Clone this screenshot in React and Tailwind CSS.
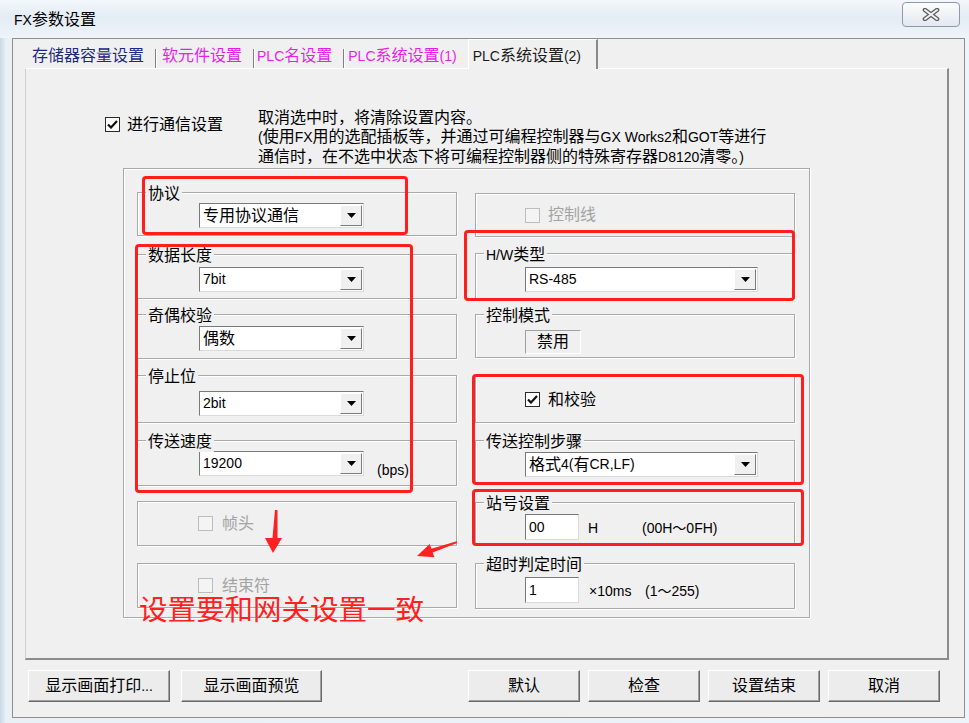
const L = ({ children }) => <span className="text-[14px]">{children}</span>;

function Check({ checked, disabled }) {
  return (
    <span
      className={`flex h-[15px] w-[15px] shrink-0 items-center justify-center border ${
        disabled ? "border-[#bdbdbd] bg-[#f4f4f4]" : "border-[#2b2b2b] bg-white"
      }`}
    >
      {checked && (
        <svg width="11" height="9" viewBox="0 0 11 9">
          <path d="M1 4.5 4 7.5 10 1" fill="none" stroke="#111" strokeWidth="2.2" />
        </svg>
      )}
    </span>
  );
}

function Group({ label, className = "", children }) {
  return (
    <div className={`relative border border-[#a9a9a9] shadow-[1px_1px_0_#fff,inset_1px_1px_0_#fff] ${className}`}>
      {label && (
        <span className="absolute left-[8px] top-[-9px] bg-[#f0f0f0] px-[2px] leading-[20px]">{label}</span>
      )}
      {children}
    </div>
  );
}

function Combo({ w, children }) {
  return (
    <div className={`flex h-[25px] ${w} border border-[#7a7a7a] border-r-[#dadada] border-b-[#dadada] bg-white`}>
      <div className="flex flex-1 items-center pl-[3px]">{children}</div>
      <div className="my-[1px] mr-[1px] flex w-[22px] items-center justify-center border border-white border-r-[#7a7a7a] border-b-[#7a7a7a] bg-[#f0f0f0]">
        <svg width="9" height="5" viewBox="0 0 9 5">
          <path d="M0 0h9L4.5 5z" fill="#000" />
        </svg>
      </div>
    </div>
  );
}

function Input({ children }) {
  return (
    <div className="flex h-[26px] w-[54px] items-center border border-[#7a7a7a] border-r-[#dadada] border-b-[#dadada] bg-white pl-[3px]">
      {children}
    </div>
  );
}

function Btn({ w, children }) {
  return (
    <div
      className={`${w} flex h-[32px] items-center justify-center border border-t-white border-l-white border-r-[#696969] border-b-[#696969] bg-[#ececec] shadow-[inset_-1px_-1px_0_#a0a0a0]`}
    >
      {children}
    </div>
  );
}

function Mark({ className }) {
  return <div className={`pointer-events-none absolute rounded-[4px] border-[3px] border-[#ff1e1e] ${className}`} />;
}

export default function App() {
  return (
    <div className="relative h-[723px] w-[969px] overflow-hidden bg-[linear-gradient(90deg,#c9d7e6_0px,#e9f0f6_6px,#eef5fa_100%)] font-['Liberation_Sans','Noto_Sans_CJK_SC',sans-serif] text-[16px] text-black">
      {/* title bar */}
      <div className="flex h-[38px] items-start bg-[linear-gradient(180deg,#f3f7fb,#e4ecf4_45%,#eef4f9)]">
        <div className="pl-[14px] pt-[10px] leading-[20px]">
          <L>FX</L>参数设置
        </div>
        <div className="ml-auto mr-[9px] mt-[2px] flex h-[25px] w-[58px] items-center justify-center rounded-[4px] border border-[#8d9aa8] bg-[linear-gradient(180deg,#fbfcfd,#e3e9ef)]">
          <svg width="20" height="13" viewBox="0 0 20 13">
            <path d="M4 2 16 11M16 2 4 11" stroke="#5e5e5e" strokeWidth="4.6" strokeLinecap="round" />
            <path d="M4 2 16 11M16 2 4 11" stroke="#f2f2f2" strokeWidth="2" strokeLinecap="round" />
          </svg>
        </div>
      </div>

      {/* dialog */}
      <div className="ml-[12px] flex h-[680px] w-[953px] flex-col border border-[#8e8e8e] bg-[#f0f0f0]">
        {/* tabs */}
        <div className="relative z-10 flex h-[29px] items-end pl-[19px]">
          <span className="mb-[2px] leading-[20px] text-[#1d2a80]">存储器容量设置</span>
          <div className="ml-[11px] h-[19px] w-[2px] border-l border-r border-l-[#808080] border-r-white" />
          <span className="mb-[2px] ml-[5px] leading-[20px] text-[#e81ee8]">软元件设置</span>
          <div className="ml-[11px] h-[19px] w-[2px] border-l border-r border-l-[#808080] border-r-white" />
          <span className="mb-[2px] ml-[2px] leading-[20px] text-[#e81ee8]">
            <L>PLC</L>名设置
          </span>
          <div className="ml-[11px] h-[19px] w-[2px] border-l border-r border-l-[#808080] border-r-white" />
          <span className="mb-[2px] ml-[3px] leading-[20px] text-[#e81ee8]">
            <L>PLC</L>系统设置<L>(1)</L>
          </span>
          <div className="mb-[-1px] ml-[11px] h-[30px] w-[130px] border-l border-t border-white border-r-2 border-r-[#8a8a8a] bg-[#f0f0f0] pl-[4px] pt-[6px] leading-[20px] text-[#1a1a1a]">
            <L>PLC</L>系统设置<L>(2)</L>
          </div>
        </div>

        {/* tab panel */}
        <div className="ml-[12px] h-[592px] w-[924px] border-b-2 border-l border-r-2 border-t border-b-[#8c8c8c] border-l-[#cfcfcf] border-r-[#8c8c8c] border-t-white">
          <div className="flex h-[99px] pl-[79px] pt-[39px]">
            <div className="mt-[7px] flex h-[19px] w-[153px] items-center self-start">
              <Check checked />
              <span className="ml-[7px]">进行通信设置</span>
            </div>
            <div className="leading-[19px]">
              <div>取消选中时，将清除设置内容。</div>
              <div>
                <L>(</L>使用<L>FX</L>用的选配插板等，并通过可编程控制器与<L>GX Works2</L>和<L>GOT</L>等进行
              </div>
              <div>
                通信时，在不选中状态下将可编程控制器侧的特殊寄存器<L>D8120</L>清零。<L>)</L>
              </div>
            </div>
          </div>

          <div className="ml-[97px] flex h-[450px] w-[687px] gap-[18px] border border-[#a9a9a9] pl-[13px] shadow-[1px_1px_0_#fff,inset_1px_1px_0_#fff]">
            {/* left column */}
            <div className="flex w-[320px] flex-col">
              <Group label="协议" className="mt-[23px] h-[44px] pl-[61px] pt-[10px]">
                <Combo w="w-[165px]">专用协议通信</Combo>
              </Group>
              <Group label="数据长度" className="mt-[18px] h-[45px] pl-[61px] pt-[12px]">
                <Combo w="w-[165px]">
                  <L>7bit</L>
                </Combo>
              </Group>
              <Group label="奇偶校验" className="mt-[15px] h-[45px] pl-[61px] pt-[11px]">
                <Combo w="w-[165px]">偶数</Combo>
              </Group>
              <Group label="停止位" className="mt-[16px] h-[48px] pl-[61px] pt-[15px]">
                <Combo w="w-[165px]">
                  <L>2bit</L>
                </Combo>
              </Group>
              <Group label="传送速度" className="mt-[17px] flex h-[46px] items-start pl-[61px] pt-[10px]">
                <Combo w="w-[165px]">
                  <L>19200</L>
                </Combo>
                <span className="ml-[13px] mt-[10px] text-[14px] leading-[18px]">(bps)</span>
              </Group>
              <Group className="mt-[15px] flex h-[45px] items-center pl-[60px]">
                <Check disabled />
                <span className="ml-[9px] text-[#a3a3a3]">帧头</span>
              </Group>
              <Group className="mt-[17px] flex h-[45px] items-center pl-[60px]">
                <Check disabled />
                <span className="ml-[9px] text-[#a3a3a3]">结束符</span>
              </Group>
            </div>

            {/* right column */}
            <div className="flex w-[320px] flex-col">
              <Group className="mt-[24px] flex h-[44px] items-center pl-[49px]">
                <Check disabled />
                <span className="ml-[8px] text-[#a3a3a3]">控制线</span>
              </Group>
              <Group
                label={
                  <>
                    <L>H/W</L>类型
                  </>
                }
                className="mt-[16px] h-[46px] pl-[49px] pt-[13px]"
              >
                <Combo w="w-[233px]">
                  <L>RS-485</L>
                </Combo>
              </Group>
              <Group label="控制模式" className="mt-[15px] h-[44px] pl-[49px] pt-[15px]">
                <div className="flex h-[24px] w-[56px] items-center justify-center border border-[#a0a0a0] border-b-white border-r-white">
                  禁用
                </div>
              </Group>
              <Group className="mt-[18px] flex h-[47px] items-center pl-[49px]">
                <Check checked />
                <span className="ml-[8px]">和校验</span>
              </Group>
              <Group label="传送控制步骤" className="mt-[17px] h-[44px] pl-[49px] pt-[11px]">
                <Combo w="w-[233px]">
                  格式<L>4(</L>有<L>CR,LF)</L>
                </Combo>
              </Group>
              <Group label="站号设置" className="mt-[18px] flex h-[42px] items-start pl-[49px] pt-[11px]">
                <Input>
                  <L>00</L>
                </Input>
                <span className="ml-[9px] mt-[5px] w-[54px] text-[14px] leading-[18px]">H</span>
                <span className="mt-[5px] text-[14px] leading-[18px]">(00H～0FH)</span>
              </Group>
              <Group label="超时判定时间" className="mt-[19px] flex h-[46px] items-start pl-[49px] pt-[13px]">
                <Input>
                  <L>1</L>
                </Input>
                <span className="ml-[10px] mt-[5px] w-[56px] text-[14px] leading-[18px]">×10ms</span>
                <span className="mt-[5px] text-[14px] leading-[18px]">(1～255)</span>
              </Group>
            </div>
          </div>
        </div>

        {/* buttons */}
        <div className="mt-[10px] flex pl-[15px] pr-[24px]">
          <Btn w="w-[142px]">
            显示画面打印<L>...</L>
          </Btn>
          <Btn w="w-[141px] ml-[11px]">显示画面预览</Btn>
          <div className="ml-auto flex gap-[8px]">
            <Btn w="w-[112px]">默认</Btn>
            <Btn w="w-[112px]">检查</Btn>
            <Btn w="w-[112px]">设置结束</Btn>
            <Btn w="w-[112px]">取消</Btn>
          </div>
        </div>
      </div>

      {/* annotations */}
      <Mark className="left-[142px] top-[176px] h-[59px] w-[266px]" />
      <Mark className="left-[135px] top-[244px] h-[249px] w-[278px]" />
      <Mark className="left-[464px] top-[230px] h-[71px] w-[331px]" />
      <Mark className="left-[472px] top-[374px] h-[111px] w-[332px]" />
      <Mark className="left-[472px] top-[489px] h-[57px] w-[332px]" />
      <svg className="pointer-events-none absolute left-0 top-0" width="969" height="723">
        <path d="M275 510 L277.5 510 L277.5 538 L282 538 L273 553 L265 538 L272.5 538 Z" fill="#ff2020" />
        <path d="M456.7 541.3 L457.3 543 L432.7 552.6 L434.4 557.3 L417 556 L429.7 544.1 L431.4 548.8 Z" fill="#ff2020" />
      </svg>
      <div className="pointer-events-none absolute left-[139px] top-[594px] text-[28.5px] leading-[32px] text-[#ff2020]">
        设置要和网关设置一致
      </div>
    </div>
  );
}
